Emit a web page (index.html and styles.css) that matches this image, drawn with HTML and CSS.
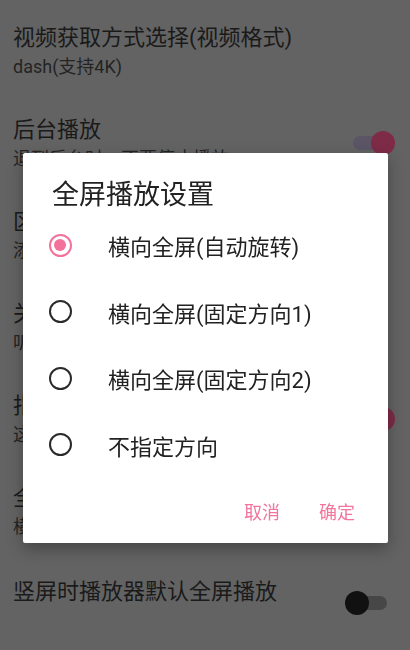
FILE: index.html
```html
<!DOCTYPE html>
<html lang="zh-CN">
<head>
<meta charset="UTF-8">
<title>设置</title>
<link rel="stylesheet" href="styles.css">
</head>
<body>

<!-- settings list (dimmed behind the dialog) -->
<div class="settings">
    <div class="pref">
        <div class="pref-text">
            <div class="pref-title">视频获取方式选择(视频格式)</div>
            <div class="pref-sub">dash(支持4K)</div>
        </div>
    </div>
    <div class="pref">
        <div class="pref-text">
            <div class="pref-title">后台播放</div>
            <div class="pref-sub">退到后台时，不要停止播放</div>
        </div>
        <div class="switch on"><span class="track"></span><span class="thumb"></span></div>
    </div>
    <div class="pref">
        <div class="pref-text">
            <div class="pref-title">区域限制解除</div>
            <div class="pref-sub">添加代理服务器</div>
        </div>
    </div>
    <div class="pref">
        <div class="pref-text">
            <div class="pref-title">关闭弹幕</div>
            <div class="pref-sub">听筒模式下关闭弹幕</div>
        </div>
    </div>
    <div class="pref">
        <div class="pref-text">
            <div class="pref-title">指定播放器</div>
            <div class="pref-sub">这将使用外部播放器</div>
        </div>
        <div class="switch on"><span class="track"></span><span class="thumb"></span></div>
    </div>
    <div class="pref">
        <div class="pref-text">
            <div class="pref-title">全屏播放设置</div>
            <div class="pref-sub">横向全屏(自动旋转)</div>
        </div>
    </div>
    <div class="pref single">
        <div class="pref-text">
            <div class="pref-title">竖屏时播放器默认全屏播放</div>
        </div>
        <div class="switch"><span class="track"></span><span class="thumb"></span></div>
    </div>
</div>

<!-- dialog -->
<div class="overlay">
    <div class="dialog">
        <div class="dialog-title">全屏播放设置</div>
        <div class="options">
            <div class="option checked"><span class="radio"></span>横向全屏(自动旋转)</div>
            <div class="option"><span class="radio"></span>横向全屏(固定方向1)</div>
            <div class="option"><span class="radio"></span>横向全屏(固定方向2)</div>
            <div class="option"><span class="radio"></span>不指定方向</div>
        </div>
        <div class="actions">
            <button>取消</button>
            <button>确定</button>
        </div>
    </div>
</div>

</body>
</html>
```

FILE: styles.css
```css
body {
    margin: 0;
    font-family: Roboto, 'Noto Sans CJK SC', sans-serif;
    background: #636363;
    color: #1a1a1a;
    overflow: hidden;
}

.settings {
    width: 410px;
}

.pref {
    display: flex;
    align-items: flex-start;
    height: 92px;
    padding: 23px 15px 0 13px;
    box-sizing: border-box;
}

.pref.single {
    padding-top: 25px;
}

.pref-text {
    flex: 1;
}

.pref-title {
    font-size: 22px;
    line-height: 30px;
    white-space: nowrap;
}

.pref-sub {
    margin-top: 3px;
    font-size: 18px;
    line-height: 22px;
    color: #242424;
    white-space: nowrap;
}

/* switch */
.switch {
    position: relative;
    width: 50px;
    height: 24px;
    margin-top: 16px;
}

.pref.single .switch {
    margin-top: 14px;
}

.switch .track {
    position: absolute;
    left: 8px;
    top: 5px;
    width: 34px;
    height: 14px;
    border-radius: 7px;
    background: #474747;
}

.switch .thumb {
    position: absolute;
    left: 0;
    top: 0;
    width: 24px;
    height: 24px;
    border-radius: 50%;
    background: #111;
}

.switch.on .track {
    background: #5b5566;
}

.switch.on .thumb {
    left: 26px;
    background: #7e2b48;
}

/* dialog */
.overlay {
    position: fixed;
    top: 0;
    left: 0;
    right: 0;
    bottom: 0;
}

.dialog {
    width: 365px;
    margin: 153px 0 0 23px;
    background: #fff;
    border-radius: 2px;
    box-shadow: 0 6px 16px rgba(0,0,0,0.3);
    color: #222;
}

.dialog-title {
    padding: 25px 0 0 29px;
    font-size: 27px;
    line-height: 34px;
    height: 34px;
}

.option {
    display: flex;
    align-items: center;
    height: 66.5px;
    padding-left: 26px;
    font-size: 22px;
}

.radio {
    width: 23px;
    height: 23px;
    margin-right: 36px;
    border: 2.5px solid #2a2a2a;
    border-radius: 50%;
    box-sizing: border-box;
    position: relative;
}

.option.checked .radio {
    border-color: #f2729b;
}

.option.checked .radio::after {
    content: "";
    position: absolute;
    left: 3px;
    top: 3px;
    width: 12px;
    height: 12px;
    border-radius: 50%;
    background: #f2729b;
}

.actions {
    display: flex;
    justify-content: flex-end;
    gap: 23px;
    padding: 15px 25px 14px 0;
}

button {
    height: 36px;
    padding: 0 8px;
    border: none;
    background: none;
    font-family: Roboto, 'Noto Sans CJK SC', sans-serif;
    font-size: 18px;
    color: #f2759d;
    cursor: pointer;
}
```
